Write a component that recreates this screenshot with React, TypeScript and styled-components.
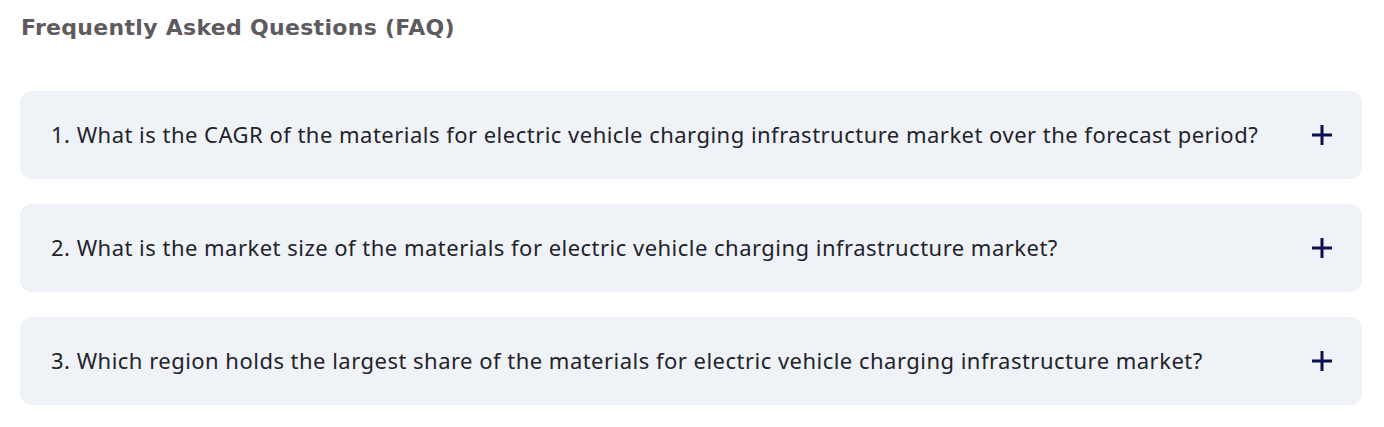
import React from "react";
import styled, { createGlobalStyle } from "styled-components";

const Global = createGlobalStyle`
  html, body { margin: 0; padding: 0; background: #ffffff; }
`;

const Page = styled.div`
  padding: 12px 22px 0 20px;
  display: flex;
  flex-direction: column;
`;

const Heading = styled.h2`
  margin: 0 0 0 1px;
  font-family: "DejaVu Sans", "Open Sans", sans-serif;
  font-weight: 700;
  font-size: 22px;
  letter-spacing: 0.3px;
  line-height: 32px;
  color: #5e5a60;
`;

const List = styled.div`
  margin-top: 47px;
  display: flex;
  flex-direction: column;
  gap: 25px;
`;

const Card = styled.div`
  height: 88px;
  box-sizing: border-box;
  background: #eff2f7;
  border-radius: 12px;
  display: flex;
  align-items: center;
  justify-content: space-between;
  padding: 0 29px 0 31px;
`;

const Question = styled.span`
  font-family: "Noto Sans", sans-serif;
  font-size: 22px;
  letter-spacing: 0.48px;
  color: #23232b;
  padding-bottom: 2px;
`;

const PlusIcon = () => (
  <svg width="22" height="22" viewBox="0 0 22 22">
    <path d="M11 1v20M1 11h20" stroke="#0e0f4e" strokeWidth="3" fill="none" />
  </svg>
);

const questions = [
  "1. What is the CAGR of the materials for electric vehicle charging infrastructure market over the forecast period?",
  "2. What is the market size of the materials for electric vehicle charging infrastructure market?",
  "3. Which region holds the largest share of the materials for electric vehicle charging infrastructure market?",
];

export default function App() {
  return (
    <>
      <Global />
      <Page>
        <Heading>Frequently Asked Questions (FAQ)</Heading>
        <List>
          {questions.map((q) => (
            <Card key={q}>
              <Question>{q}</Question>
              <PlusIcon />
            </Card>
          ))}
        </List>
      </Page>
    </>
  );
}
